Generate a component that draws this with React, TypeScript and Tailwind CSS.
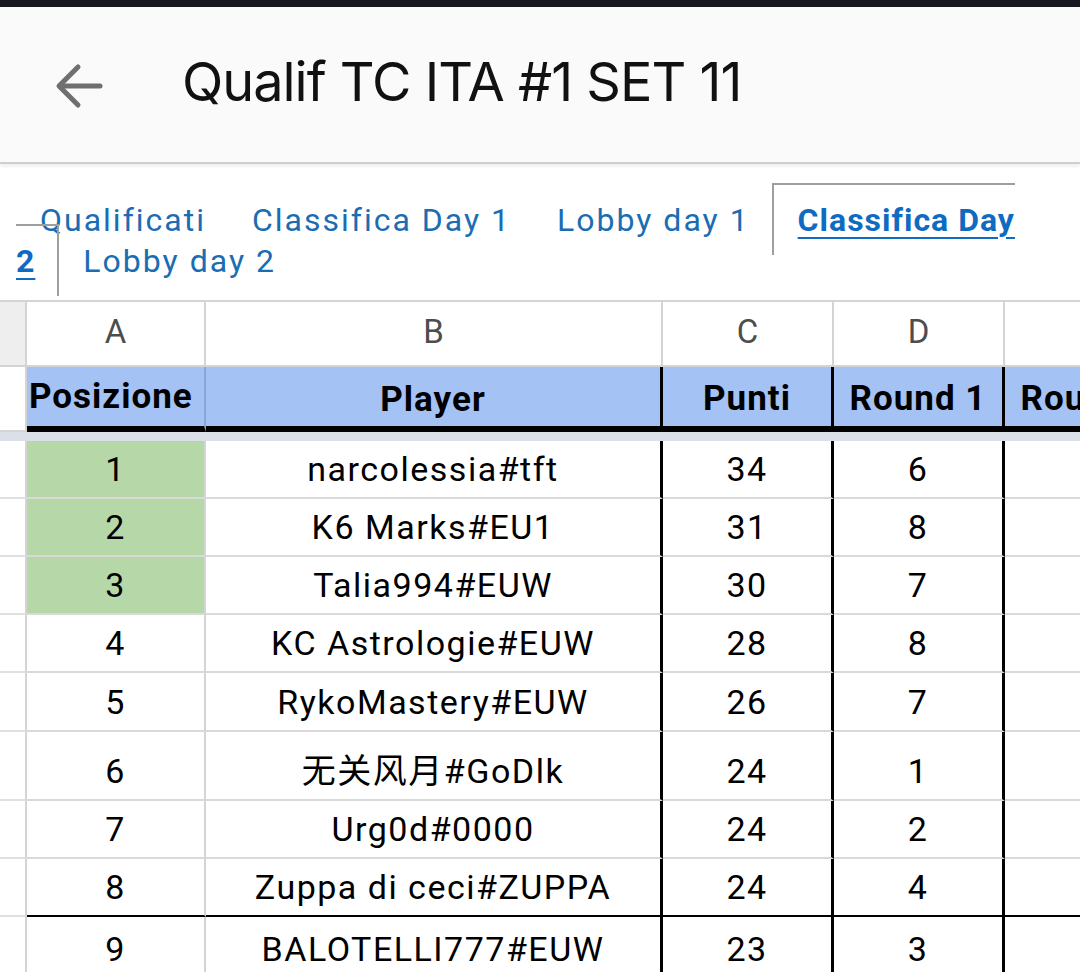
import React from 'react';

interface PlayerRow {
  pos: number;
  name: string;
  punti: number;
  round1: number;
  height: number;
  top3?: boolean;
  blackBottom?: boolean;
}

const rows: PlayerRow[] = [
  { pos: 1, name: 'narcolessia#tft', punti: 34, round1: 6, height: 58, top3: true },
  { pos: 2, name: 'K6 Marks#EU1', punti: 31, round1: 8, height: 58, top3: true },
  { pos: 3, name: 'Talia994#EUW', punti: 30, round1: 7, height: 58, top3: true },
  { pos: 4, name: 'KC Astrologie#EUW', punti: 28, round1: 8, height: 58 },
  { pos: 5, name: 'RykoMastery#EUW', punti: 26, round1: 7, height: 59 },
  { pos: 6, name: '无关风月#GoDlk', punti: 24, round1: 1, height: 69 },
  { pos: 7, name: 'Urg0d#0000', punti: 24, round1: 2, height: 58 },
  { pos: 8, name: 'Zuppa di ceci#ZUPPA', punti: 24, round1: 4, height: 58, blackBottom: true },
  { pos: 9, name: 'BALOTELLI777#EUW', punti: 23, round1: 3, height: 62 },
];

const tabs = ['Qualificati', 'Classifica Day 1', 'Lobby day 1'];

const cellFont = { fontFamily: 'Roboto, "Noto Sans CJK SC", sans-serif' };

export default function App() {
  const headCell = 'h-[65px] bg-[#a4c2f4] border-b-[6px] border-b-black flex items-end pb-[6px] text-[35px] leading-[40px] tracking-[1px] font-bold text-black whitespace-nowrap';
  return (
    <div className="w-[1080px] h-[972px] overflow-hidden bg-white" style={cellFont}>
      {/* status strip */}
      <div className="h-[7px] bg-[#16171f]" />

      {/* app bar */}
      <div className="h-[157px] bg-[#fafafa] border-b-2 border-[#cfcfcf] shadow-[0_2px_4px_rgba(0,0,0,0.08)] flex items-center">
        <div className="w-[182px] flex items-center pl-[54px]">
          <svg width="50" height="50" viewBox="0 0 50 50" fill="none" stroke="#6f6f6f" strokeWidth="5" strokeLinecap="round" strokeLinejoin="round">
            <path d="M46 26 H6" />
            <path d="M24 7 L5 26 L24 45" />
          </svg>
        </div>
        <div
          className="text-[54px] tracking-[-1px] text-[#111] leading-none pb-[6px]"
          style={{ fontFamily: 'Inter, "Open Sans", sans-serif' }}
        >
          Qualif TC ITA #1 SET 11
        </div>
      </div>

      {/* sheet tabs */}
      <div className="w-[1022px] overflow-hidden pl-[16px] pt-[36px] pb-[18px] text-[32px] leading-[41px] tracking-[2px] text-[#1b6db3]">
        {tabs.map(t => (
          <span key={t} className="pl-6 pr-[22px]">
            {t}
          </span>
        ))}
        <span className="pl-6 pr-[22px] py-[16px] border-t-2 border-l-2 border-r-2 border-[#9e9e9e] box-decoration-slice font-bold tracking-[1px] underline underline-offset-[6px] decoration-2 text-[#0f6bc2]">
          Classifica Day 2
        </span>
        <span className="px-6">Lobby day 2</span>
      </div>

      {/* sheet grid */}
      <div className="w-[1200px] border-t-2 border-[#d4d4d4] grid grid-cols-[27px_179px_457px_171px_171px_171px_24px]">
        {/* column letters */}
        <div className="h-[65px] bg-[#eeeeee] border-r-2 border-b-2 border-[#d4d4d4]" />
        {['A', 'B', 'C', 'D', ''].map((l, i) => (
          <div
            key={i}
            className="h-[65px] border-r-2 border-b-2 border-[#d4d4d4] flex items-end justify-center pb-[13px] text-[33px] leading-[40px] text-[#4d4d4d]"
          >
            {l}
          </div>
        ))}
        <div className="h-[65px] border-b-2 border-[#d4d4d4]" />

        {/* header row */}
        <div className="h-[65px] border-r-2 border-b-2 border-[#d4d4d4]" />
        <div className={`${headCell} border-r-2 border-r-[#8aa6d6] pl-[2px] pb-[9px]`}>Posizione</div>
        <div className={`${headCell} border-r-[3px] border-r-black justify-center pb-[5px]`}>Player</div>
        <div className={`${headCell} border-r-[3px] border-r-black justify-center pb-[7px]`}>Punti</div>
        <div className={`${headCell} border-r-[3px] border-r-black justify-center pb-[7px]`}>Round 1</div>
        <div className={`${headCell} border-r-[3px] border-r-black justify-center pb-[7px]`}>Round 2</div>
        <div className="h-[65px] bg-[#a4c2f4] border-b-[6px] border-b-black" />

        {/* frozen divider */}
        <div className="col-span-7 h-[9px] bg-[#dadfe8]" />

        {/* body rows */}
        {rows.map(r => {
          const bottom = r.blackBottom ? 'border-b-2 border-b-black' : 'border-b-2 border-b-[#d9d9d9]';
          const text = 'flex items-end justify-center pb-[8px] text-[34px] leading-[40px] tracking-[1.5px] text-black whitespace-nowrap';
          return (
            <React.Fragment key={r.pos}>
              <div style={{ height: r.height }} className="border-r-2 border-r-[#d4d4d4] border-b-2 border-b-[#e0e0e0]" />
              <div style={{ height: r.height }} className={`${r.top3 ? 'bg-[#b6d7a8]' : 'bg-white'} border-r-2 border-r-[#d4d4d4] ${bottom} ${text}`}>
                {r.pos}
              </div>
              <div style={{ height: r.height }} className={`border-r-[3px] border-r-black ${bottom} ${text}`}>
                {r.name}
              </div>
              <div style={{ height: r.height }} className={`border-r-[3px] border-r-black ${bottom} ${text}`}>
                {r.punti}
              </div>
              <div style={{ height: r.height }} className={`border-r-[3px] border-r-black ${bottom} ${text}`}>
                {r.round1}
              </div>
              <div style={{ height: r.height }} className={`border-r-[3px] border-r-black ${bottom}`} />
              <div style={{ height: r.height }} className={bottom} />
            </React.Fragment>
          );
        })}
      </div>
    </div>
  );
}
